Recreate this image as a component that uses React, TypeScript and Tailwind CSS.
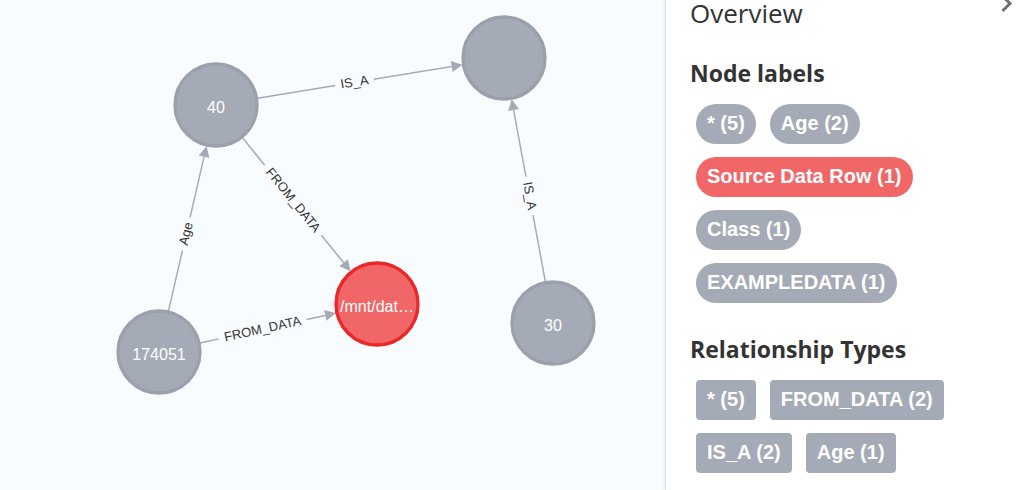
import React from "react";

type GraphNode = { id: string; x: number; y: number; caption: string; selected?: boolean };
type GraphEdge = { from: string; to: string; type: string; gap: number; flip?: boolean };
type Label = { name: string; count: number; highlighted?: boolean };

const RADIUS = 42;
const ARROW = 11;

const nodes: GraphNode[] = [
  { id: "age40", x: 216, y: 105, caption: "40" },
  { id: "class", x: 504, y: 58, caption: "" },
  { id: "age30", x: 553, y: 323, caption: "30" },
  { id: "person", x: 159, y: 352, caption: "174051" },
  { id: "source", x: 377, y: 304, caption: "/mnt/dat…", selected: true },
];

const edges: GraphEdge[] = [
  { from: "age40", to: "class", type: "IS_A", gap: 39 },
  { from: "age40", to: "source", type: "FROM_DATA", gap: 90 },
  { from: "person", to: "age40", type: "Age", gap: 34 },
  { from: "person", to: "source", type: "FROM_DATA", gap: 90 },
  { from: "age30", to: "class", type: "IS_A", gap: 39, flip: true },
];

const nodeLabels: Label[] = [
  { name: "*", count: 5 },
  { name: "Age", count: 2 },
  { name: "Source Data Row", count: 1, highlighted: true },
  { name: "Class", count: 1 },
  { name: "EXAMPLEDATA", count: 1 },
];

const relationshipTypes: Label[] = [
  { name: "*", count: 5 },
  { name: "FROM_DATA", count: 2 },
  { name: "IS_A", count: 2 },
  { name: "Age", count: 1 },
];

function Edge({ edge }: { edge: GraphEdge }) {
  const a = nodes.find((n) => n.id === edge.from)!;
  const b = nodes.find((n) => n.id === edge.to)!;
  const dist = Math.hypot(b.x - a.x, b.y - a.y);
  const angle = (Math.atan2(b.y - a.y, b.x - a.x) * 180) / Math.PI;
  const end = dist - RADIUS;
  const mid = (RADIUS + end - ARROW) / 2;
  return (
    <g transform={`translate(${a.x} ${a.y}) rotate(${angle})`}>
      <path
        d={`M${RADIUS} 0H${mid - edge.gap / 2}M${mid + edge.gap / 2} 0H${end - ARROW}`}
        className="stroke-[#a5abb6]"
        strokeWidth="1.5"
      />
      <path d={`M${end} 0l${-ARROW} -5.5v11z`} className="fill-[#a5abb6]" />
      <text
        x={mid}
        y="4"
        textAnchor="middle"
        className="fill-[#333333] text-[13px]"
        transform={edge.flip ? `rotate(180 ${mid} 0)` : undefined}
      >
        {edge.type}
      </text>
    </g>
  );
}

function Graph() {
  return (
    <svg
      width="665"
      height="490"
      className="block max-w-none font-['Liberation_Sans',Arial,sans-serif]"
      role="img"
      aria-label="Graph"
    >
      {edges.map((edge) => (
        <Edge key={edge.from + edge.to} edge={edge} />
      ))}
      {nodes.map((node) => (
        <g key={node.id}>
          <circle
            cx={node.x}
            cy={node.y}
            r="41"
            strokeWidth="3.3"
            className={node.selected ? "fill-[#f16667] stroke-[#eb2728]" : "fill-[#a5abb6] stroke-[#9aa1ac]"}
          />
          <text x={node.x} y={node.y + 8} textAnchor="middle" className="fill-white text-[16px]">
            {node.caption}
          </text>
        </g>
      ))}
    </svg>
  );
}

function LabelList({ title, items, pill }: { title: string; items: Label[]; pill?: boolean }) {
  return (
    <section>
      <h2 className="text-[23px] leading-8 font-bold">{title}</h2>
      <ul className="mt-[15px] flex flex-wrap gap-x-[14px] gap-y-[13px] pl-[6px] pr-16">
        {items.map((item) => (
          <li key={item.name}>
            <button
              type="button"
              className={`block h-10 px-[11px] pb-[2px] font-['Liberation_Sans',Arial,sans-serif] text-[20px] leading-6 font-bold whitespace-nowrap text-white ${
                pill ? "rounded-full" : "rounded-[4px]"
              } ${item.highlighted ? "bg-[#f16667]" : "bg-[#a5abb6]"}`}
            >
              {item.name} ({item.count})
            </button>
          </li>
        ))}
      </ul>
    </section>
  );
}

export default function App() {
  return (
    <div className="flex min-h-screen bg-[#f9fcff] font-['Open_Sans','Noto_Sans',sans-serif] text-[#333333]">
      <main className="min-w-0 flex-1 overflow-hidden">
        <Graph />
      </main>
      <aside className="w-[362px] shrink-0 border-l border-[#e0e3e7] bg-white pr-[14px] pl-6 shadow-[0_0_4px_rgba(0,0,0,0.12)]">
        <header className="flex h-[57px] items-start justify-between">
          <h1 className="text-[26px] leading-[26px] font-normal">Overview</h1>
          <button type="button" aria-label="Collapse panel" className="text-[#717171]">
            <svg width="14" height="14" viewBox="0 0 14 14" fill="none" stroke="currentColor" strokeWidth="3">
              <path d="M2.5 -5L11 3.5L3.5 11" />
            </svg>
          </button>
        </header>
        <div className="flex flex-col gap-[30px]">
          <LabelList title="Node labels" items={nodeLabels} pill />
          <LabelList title="Relationship Types" items={relationshipTypes} />
        </div>
      </aside>
    </div>
  );
}
